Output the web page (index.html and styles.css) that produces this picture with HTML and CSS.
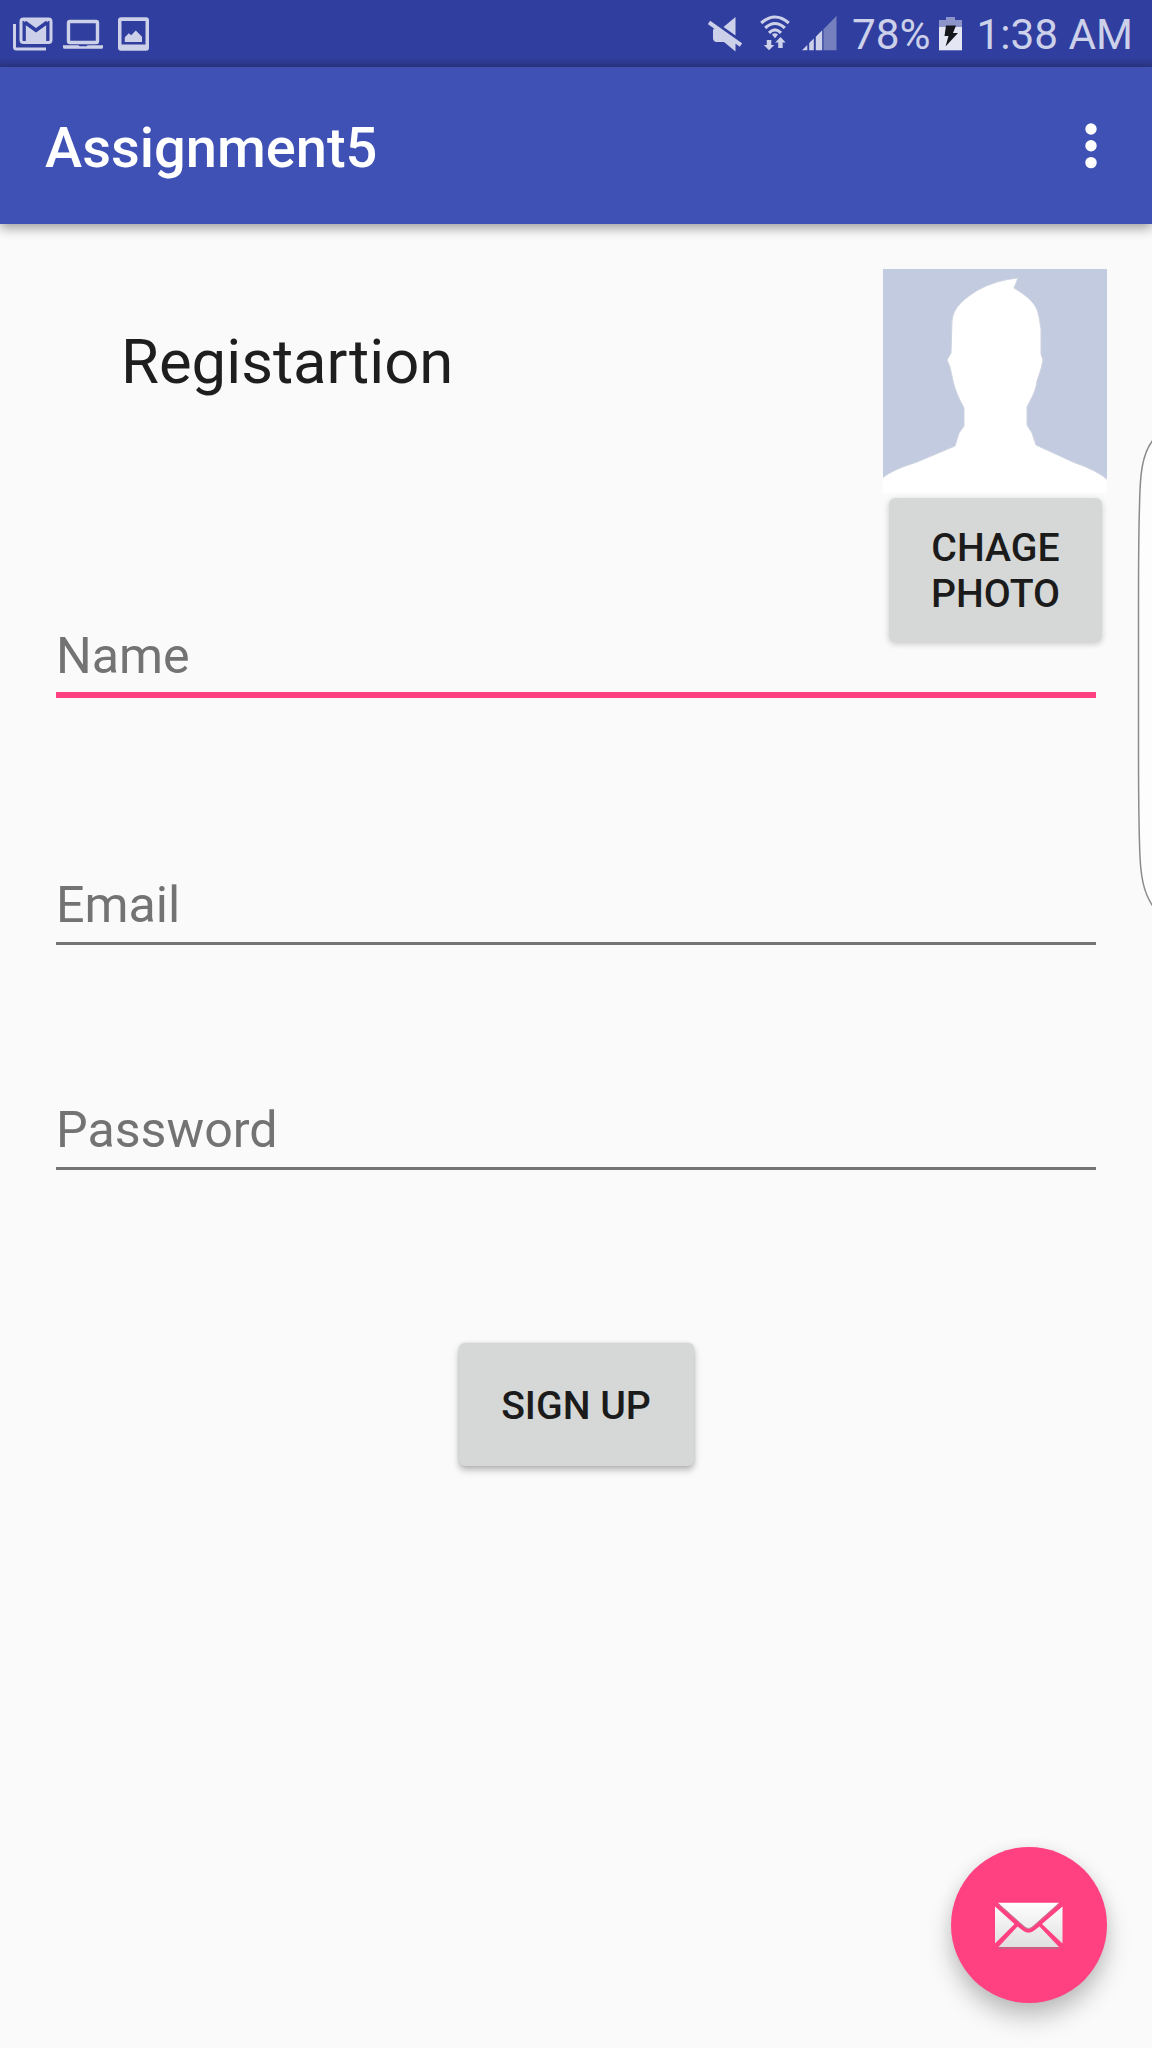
FILE: index.html
```html
<!DOCTYPE html>
<html lang="en">
<head>
<meta charset="utf-8">
<title>Assignment5</title>
<link rel="stylesheet" href="styles.css">
</head>
<body>
<div class="screen">
  <header class="status-bar">
    <div class="notifications">
      <svg width="40" height="34" viewBox="0 0 40 34" fill="none" stroke="#cdd0e9">
        <path d="M1.500 7v23q0 2 2 2H33" stroke-width="3"/>
        <rect x="8" y="2" width="30" height="23.500" rx="2.500" stroke-width="3"/>
        <path d="M12.500 26V8L23 15.500 33.500 8v18z" fill="#cdd0e9" stroke="none"/>
        <path d="M9 3h28L23 12.500z" fill="#cdd0e9" stroke="none"/>
        <path d="M12 5l11 8 11-8" stroke="#303f9f" stroke-width="3.200"/>
        <path d="M11.500 5v19M34.500 5v19" stroke="#303f9f" stroke-width="2.400"/>
      </svg>
      <svg width="40" height="34" viewBox="0 0 40 34" fill="none" stroke="#cdd0e9">
        <rect x="5.500" y="4.500" width="29" height="21" rx="1.500" stroke-width="3.400"/>
        <path d="M0 28.200h15.500l1 1h7l1-1H40v2q0 1.500-1.500 1.500h-37Q0 31.700 0 30.200z" fill="#cdd0e9" stroke="none"/>
      </svg>
      <svg width="31" height="34" viewBox="0 0 31 34">
        <path fill="#cdd0e9" fill-rule="evenodd" d="M3 .3h25q3 0 3 3v27.400q0 3-3 3H3q-3 0-3-3V3.300q0-3 3-3zM3.500 4v23.500h24V4z"/>
        <path fill="#cdd0e9" d="M6.800 25v-4.800l4-4 2.400 2 4.600-4.700 6.200 6.200V25z"/>
      </svg>
    </div>
    <div class="system">
      <svg class="mute" width="34" height="35" viewBox="0 0 34 35">
        <path fill="#cdd0e9" d="M27.500 0v18.500L15.500 10zM6 11.500h3.500L27.500 24v10.500L16 25H8q-3-1-3-4v-8z"/>
        <path d="M3 4.800L34 26" stroke="#303f9f" stroke-width="3"/>
        <path d="M1 5.500L33 28" stroke="#cdd0e9" stroke-width="4"/>
      </svg>
      <svg class="wifi" width="30" height="36" viewBox="0 0 30 36">
        <g fill="none" stroke="#cdd0e9" stroke-width="3.100">
          <path d="M1.200 8Q15-4 28.800 8"/>
          <path d="M5.200 13Q15 4 24.800 13"/>
          <path d="M9 17.800q6-6 12 0"/>
        </g>
        <path fill="#cdd0e9" d="M12 19.500q3-2.500 6 0l-3 3.700zM6.800 25h4.500v5h3L9 35.300 3.800 30h3zM20.500 22l5.200 5.500h-3V33h-4.500v-5.500h-3z"/>
      </svg>
      <svg class="signal" width="35" height="35" viewBox="0 0 35 35">
        <path fill="#7680bf" d="M34.500 0v34.200h-13v-21z"/>
        <path fill="#cdd0e9" d="M0 34.200l5.300-5.300v5.300zM7.200 34.200V27l4.600-4.600v11.800zM13.800 34.200V20.700l4.600-4.600v18.100zM20.200 34.200h-6.400V20.700l6.400-6.400z"/>
      </svg>
      <span class="percent">78%</span>
      <svg class="battery" width="23" height="34" viewBox="0 0 23 34">
        <path fill="#8c94c9" d="M7 0h9v3h7v7H0V3h7z"/>
        <path fill="#e4e6f3" d="M0 10h23v23.300H0z"/>
        <path fill="#15171c" d="M7 8.500h10L14 16h5L6.500 29.500 9.500 19H5.500z"/>
      </svg>
      <span class="clock">1:38 AM</span>
    </div>
  </header>
  <div class="toolbar">
    <h1 class="app-title">Assignment5</h1>
    <svg width="12" height="46" viewBox="0 0 12 46" fill="#fff">
      <circle cx="6" cy="6" r="5.700"/><circle cx="6" cy="22.800" r="5.700"/><circle cx="6" cy="39.600" r="5.700"/>
    </svg>
  </div>
  <main class="content">
    <section class="profile">
      <h2 class="heading">Registartion</h2>
      <div class="photo">
        <svg class="avatar" width="224" height="224" viewBox="0 0 224 224">
          <path fill="#c2cbdf" d="M0 0h224v224H0z"/>
          <path fill="#fff" stroke="#cdd3e1" stroke-width="1" d="M-2 210Q8 201 34 193L72 177 76 164 81 157V139C76 130 72 121 70 112L67 98 64 91 68 84 69 52C70 38 82 29 95 21Q113 11 135 9L131 19C144 27 154 34 156 48L158 60 158 85 160 91 158 100 154 112C153 122 148 130 144 138V156L149 164 153 176 190 193Q216 202 226 212V226H-2z"/>
        </svg>
        <button class="button photo-button">CHAGE<br>PHOTO</button>
      </div>
    </section>
    <div class="field focused">Name</div>
    <div class="field email">Email</div>
    <div class="field password">Password</div>
    <button class="button sign-up">SIGN UP</button>
  </main>
  <svg class="edge-handle" width="16" height="470" viewBox="0 0 16 470">
    <path d="M17 2C6 16 4 36 3.500 68Q2.500 100 2.500 170V310Q2.500 370 3.500 405C4 440 8 455 17 468.500" fill="#fdfdfd" stroke="#8b8b8b" stroke-width="1.500"/>
  </svg>
  <button class="fab" aria-label="Send mail">
    <svg width="70" height="48" viewBox="0 0 70 48">
      <defs><linearGradient id="paper" x1="0" y1="0" x2="0" y2="47" gradientUnits="userSpaceOnUse"><stop offset="0" stop-color="#fff"/><stop offset="1" stop-color="#dedede"/></linearGradient></defs>
      <g fill="url(#paper)">
        <path d="M4 .8h61L38 25q-3.500 3-7 0z"/>
        <path d="M1 4.500L20.500 22 1 41.500zM68.500 4.500L48 22l20.500 19.500z"/>
        <path d="M23.500 24.500l6 4.500q5 3.500 10 0l6-4.500L65 45H4.500z"/>
      </g>
      <path d="M4.500 46.200H64.500" stroke="#a77683" stroke-width="1.300"/>
      <path d="M5 2.500l26 22.800q3.500 2.700 7 0L64 2.500" fill="none" stroke="#b98a98" stroke-width="1"/>
    </svg>
  </button>
</div>
</body>
</html>
```
FILE: styles.css
```css
* { box-sizing: border-box; }
body { margin: 0; font-family: Roboto, sans-serif; }
svg { display: block; flex: none; }
h1, h2 { margin: 0; }
button { border: 0; padding: 0; font-family: inherit; }

.screen {
  position: relative;
  display: flex;
  flex-direction: column;
  width: 1152px;
  height: 2048px;
  overflow: hidden;
  background: #fafafa;
}

.status-bar {
  display: flex;
  justify-content: space-between;
  height: 67px;
  padding: 0 19px 0 13px;
  background: linear-gradient(#303f9f 57px, #2b3786 67px);
  color: #cdd0e9;
  font-size: 42.3px;
  line-height: 50px;
}
.notifications { display: flex; gap: 10px; padding-top: 17px; }
.notifications svg:last-child { margin-left: 5px; }
.system { display: flex; }
.mute { margin: 17px 18px 0 0; }
.wifi { margin: 15px 12px 0 0; }
.signal { margin: 16px 15px 0 0; }
.percent { padding-top: 10px; }
.battery { margin: 17px 14px 0 9px; }
.clock { padding-top: 10px; }

.toolbar {
  position: relative;
  display: flex;
  align-items: center;
  justify-content: space-between;
  height: 157px;
  padding: 0 55px 0 45px;
  background: #3f51b5;
  color: #fff;
  box-shadow: 0 4px 11px rgba(0, 0, 0, .38);
}
.app-title { padding-top: 4px; font-size: 56px; font-weight: 500; line-height: 66px; }

.content { display: flex; flex-direction: column; padding: 45px 45px 0; }
.profile { display: flex; justify-content: space-between; height: 336px; }
.heading { padding: 57px 0 0 76px; font-size: 61.6px; font-weight: 400; line-height: 72px; color: #1e1e1e; }
.photo { display: flex; flex-direction: column; align-items: center; gap: 5px; }

.button {
  flex: none;
  padding-top: 2px;
  border-radius: 6px;
  background: #d6d8d7;
  color: #1b1b1b;
  font-size: 39.2px;
  font-weight: 500;
  line-height: 46px;
  box-shadow: 0 4px 7px rgba(0, 0, 0, .27), 0 0 3px rgba(0, 0, 0, .12);
}
.photo-button { width: 213px; height: 144px; margin-left: 1px; box-shadow: 0 2px 6px rgba(0, 0, 0, .2); }

.field {
  height: 80px;
  margin: 13px 11px 0;
  padding-top: 8px;
  border-bottom: 3px solid #747474;
  color: #737373;
  font-size: 50.2px;
  line-height: 59px;
}
.focused { border-bottom: 6px solid #ff4081; }
.email { height: 78px; margin-top: 169px; }
.password { height: 78px; margin-top: 147px; }
.sign-up { align-self: center; width: 235px; height: 123px; margin-top: 173px; padding-top: 3px; }

.edge-handle { position: absolute; top: 438px; right: 0; }
.fab {
  position: absolute;
  right: 45px;
  bottom: 45px;
  display: flex;
  align-items: center;
  justify-content: center;
  width: 156px;
  height: 156px;
  padding-top: 1px;
  border-radius: 50%;
  background: #ff4081;
  box-shadow: 0 15px 25px rgba(0, 0, 0, .22), 0 2px 16px rgba(0, 0, 0, .07);
}
```
